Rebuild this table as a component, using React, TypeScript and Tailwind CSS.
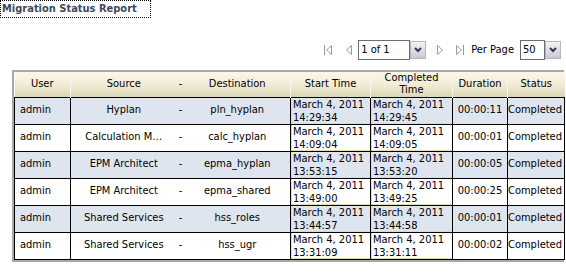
import React from "react";

type Row = {
  user: string;
  source: string;
  dest: string;
  start: [string, string];
  end: [string, string];
  duration: string;
  status: string;
};

const rows: Row[] = [
  { user: "admin", source: "Hyplan", dest: "pln_hyplan", start: ["March 4, 2011", "14:29:34"], end: ["March 4, 2011", "14:29:45"], duration: "00:00:11", status: "Completed" },
  { user: "admin", source: "Calculation M…", dest: "calc_hyplan", start: ["March 4, 2011", "14:09:04"], end: ["March 4, 2011", "14:09:05"], duration: "00:00:01", status: "Completed" },
  { user: "admin", source: "EPM Architect", dest: "epma_hyplan", start: ["March 4, 2011", "13:53:15"], end: ["March 4, 2011", "13:53:20"], duration: "00:00:05", status: "Completed" },
  { user: "admin", source: "EPM Architect", dest: "epma_shared", start: ["March 4, 2011", "13:49:00"], end: ["March 4, 2011", "13:49:25"], duration: "00:00:25", status: "Completed" },
  { user: "admin", source: "Shared Services", dest: "hss_roles", start: ["March 4, 2011", "13:44:57"], end: ["March 4, 2011", "13:44:58"], duration: "00:00:01", status: "Completed" },
  { user: "admin", source: "Shared Services", dest: "hss_ugr", start: ["March 4, 2011", "13:31:09"], end: ["March 4, 2011", "13:31:11"], duration: "00:00:02", status: "Completed" },
];

function Chevron() {
  return (
    <div className="w-[16px] h-[18px] shrink-0 flex items-center justify-center bg-gradient-to-b from-[#f4f4f4] to-[#c9c9d2] border border-[#b5b5bd]">
      <svg width="8" height="6" viewBox="0 0 8 6">
        <path d="M1 1 L4 4 L7 1" stroke="#2b3a55" strokeWidth="2" fill="none" />
      </svg>
    </div>
  );
}

function Arrow({ dir, bar }: { dir: "l" | "r"; bar?: boolean }) {
  return (
    <svg width="10" height="12" viewBox="0 0 10 12" className="shrink-0">
      {dir === "l" ? (
        <>
          {bar && <path d="M1.5 1 V11" stroke="#9a9a9a" />}
          <path d="M8.5 1.5 L3.5 6 L8.5 10.5 Z" fill="none" stroke="#9a9a9a" />
        </>
      ) : (
        <>
          <path d="M1.5 1.5 L6.5 6 L1.5 10.5 Z" fill="none" stroke="#9a9a9a" />
          {bar && <path d="M8.5 1 V11" stroke="#9a9a9a" />}
        </>
      )}
    </svg>
  );
}

function Select({ value, w }: { value: string; w: string }) {
  return (
    <div className="flex items-center shrink-0">
      <div className={`${w} shrink-0 h-[20px] border border-[#6d6d6d] bg-white px-[2px] leading-[18px]`}>{value}</div>
      <Chevron />
    </div>
  );
}

function DateCell({ d }: { d: [string, string] }) {
  return (
    <td className="border border-black p-0 align-top">
      <div className="border-l border-b border-[#ecd7b4] pl-[1px] leading-[13px] text-left h-[26px]">
        <div>{d[0]}</div>
        <div>{d[1]}</div>
      </div>
    </td>
  );
}

export default function App() {
  return (
    <div
      className="w-[566px] h-[273px] bg-white text-[11px] text-black overflow-hidden"
      style={{ fontFamily: '"DejaVu Sans Condensed", "DejaVu Sans", sans-serif', fontStretch: "condensed" }}
    >
      <div className="inline-block border border-dotted border-black px-[1px] h-[18px] w-[151px] font-bold text-[#3d4a5a] leading-[16px]">
        Migration Status Report
      </div>

      <div className="flex justify-end items-center mt-[22px] mr-[5px] h-[20px]">
        <Arrow dir="l" bar />
        <span className="w-[10px]" />
        <Arrow dir="l" />
        <span className="w-[5px]" />
        <Select value="1 of 1" w="w-[52px]" />
        <span className="w-[10px]" />
        <Arrow dir="r" />
        <span className="w-[9px]" />
        <Arrow dir="r" bar />
        <span className="w-[6px]" />
        <span>Per Page</span>
        <span className="w-[6px]" />
        <Select value="50" w="w-[25px]" />
      </div>

      <div className="ml-[12px] mt-[10px] w-[552px] border-2 border-[#a8a8a8]">
        <table className="w-full border-collapse table-fixed">
          <colgroup>
            <col className="w-[56px]" />
            <col className="w-[106px]" />
            <col className="w-[8px]" />
            <col className="w-[106px]" />
            <col className="w-[80px]" />
            <col className="w-[82px]" />
            <col className="w-[55px]" />
            <col className="w-[57px]" />
          </colgroup>
          <thead>
            <tr className="h-[25px] bg-gradient-to-b from-[#fcf7e8] via-[#f2ecd6] to-[#d9d6b6] leading-[12px]">
              <th className="font-normal border-r border-[#f5f5f0]">User</th>
              <th className="font-normal">Source</th>
              <th className="font-normal">-</th>
              <th className="font-normal border-r border-[#f5f5f0]">Destination</th>
              <th className="font-normal border-r border-[#f5f5f0]">Start Time</th>
              <th className="font-normal border-r border-[#f5f5f0]">
                Completed
                <br />
                Time
              </th>
              <th className="font-normal border-r border-[#f5f5f0]">Duration</th>
              <th className="font-normal">Status</th>
            </tr>
          </thead>
          <tbody>
            {rows.map((r, i) => (
              <tr key={i} className={`h-[27px] ${i % 2 === 0 ? "bg-[#dfe5ef]" : "bg-white"}`}>
                <td className="border border-black pl-[5px] text-left">{r.user}</td>
                <td className="border-y border-black text-center whitespace-nowrap overflow-hidden">{r.source}</td>
                <td className="border-y border-black text-center">-</td>
                <td className="border-y border-black text-center">{r.dest}</td>
                <DateCell d={r.start} />
                <DateCell d={r.end} />
                <td className="border border-black text-center">{r.duration}</td>
                <td className="border border-black text-center pr-[2px]">{r.status}</td>
              </tr>
            ))}
          </tbody>
        </table>
      </div>
    </div>
  );
}
